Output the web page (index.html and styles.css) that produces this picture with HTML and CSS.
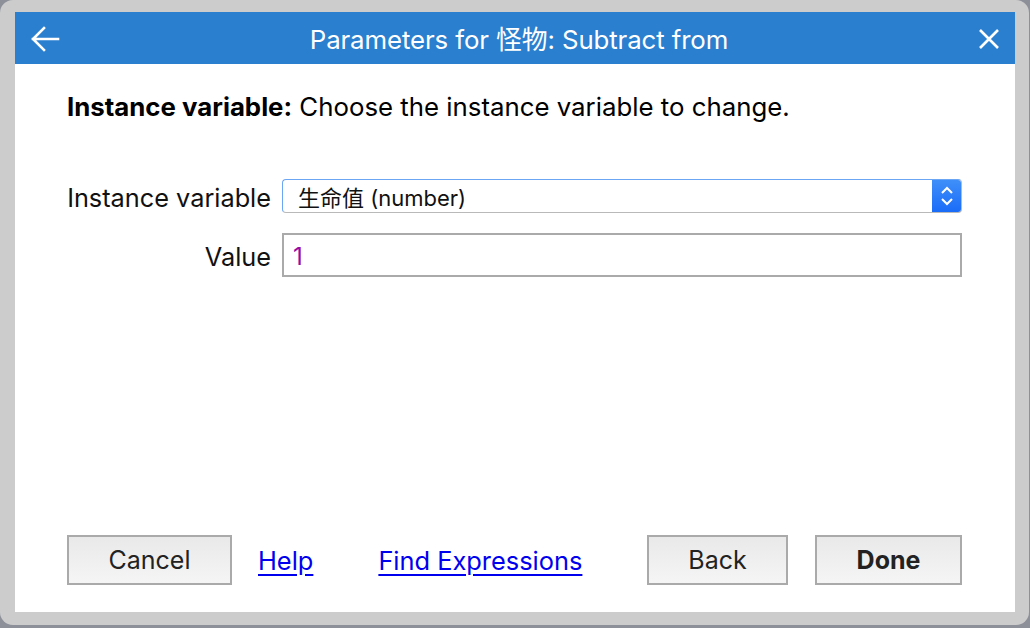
FILE: index.html
```html
<!DOCTYPE html>
<html>
<head>
<meta charset="utf-8">
<link rel="stylesheet" href="styles.css">
</head>
<body>
<div class="frame">
  <div class="dialog">
    <div class="header">
      <svg class="back" width="30" height="28" viewBox="0 0 30 28"><path d="M28 14H3M14 3L3 14l11 11" fill="none" stroke="#fff" stroke-width="2.6" stroke-linecap="square"/></svg>
      <div class="title">Parameters for 怪物: Subtract from</div>
      <svg class="close" width="22" height="22" viewBox="0 0 22 22"><path d="M2 2l18 18M20 2L2 20" fill="none" stroke="#fff" stroke-width="2.6"/></svg>
    </div>
    <div class="content">
      <p class="desc"><b>Instance variable:</b> Choose the instance variable to change.</p>
      <div class="form">
        <label class="lbl">Instance variable</label>
        <div class="select">
          <span class="select-text">生命值 (number)</span>
          <span class="select-btn"><svg width="14" height="22" viewBox="0 0 14 22"><path d="M2 8l5-5 5 5M2 14l5 5 5-5" fill="none" stroke="#fff" stroke-width="2"/></svg></span>
        </div>
        <label class="lbl">Value</label>
        <div class="input">1</div>
      </div>
    </div>
    <div class="footer">
      <button class="btn cancel">Cancel</button>
      <a class="link help" href="#">Help</a>
      <a class="link find" href="#">Find Expressions</a>
      <span class="spacer"></span>
      <button class="btn back-btn">Back</button>
      <button class="btn done">Done</button>
    </div>
  </div>
</div>
</body>
</html>
```
FILE: styles.css
```css
html, body {
  margin: 0;
  padding: 0;
}
body {
  width: 1030px;
  height: 628px;
  background: #8d9099;
  overflow: hidden;
  font-family: Inter, "Noto Sans CJK SC", sans-serif;
}
.frame {
  box-sizing: border-box;
  width: 1029px;
  height: 625px;
  background: #cccccc;
  border-radius: 13px;
  padding: 12px 14px 13px 15px;
}
.dialog {
  background: #fff;
  height: 600px;
  display: flex;
  flex-direction: column;
}
.header {
  height: 52px;
  background: #2a7fcf;
  display: flex;
  align-items: center;
  padding: 0 15px 0 15px;
  color: #fff;
}
.back {
  display: block;
  margin-top: 1px;
}
.title {
  flex: 1;
  text-align: center;
  font-size: 25.8px;
  letter-spacing: -0.1px;
  margin-top: -1px;
}
.close {
  display: block;
  margin-top: 1px;
}
.content {
  flex: 1;
  padding: 0 53px 0 52px;
}
.desc {
  margin: 26px 0 0 0;
  font-size: 25.8px;
  line-height: 34px;
  color: #000;
}
.desc b {
  font-weight: 700;
}
.form {
  margin-top: 55px;
  display: grid;
  grid-template-columns: 204px 1fr;
  grid-template-rows: 34px 44px;
  column-gap: 11px;
  row-gap: 20px;
  align-items: center;
}
.lbl {
  text-align: right;
  font-size: 25.3px;
  color: #111;
  white-space: nowrap;
  padding-top: 3px;
}
.select {
  box-sizing: border-box;
  height: 34px;
  display: flex;
  align-items: stretch;
  border: 1px solid #b9b9b9;
  border-left-color: #6aa6f4;
  border-top-color: #6aa6f4;
  border-radius: 4px;
  overflow: hidden;
  background: #fff;
}
.select-text {
  flex: 1;
  padding-left: 15px;
  font-size: 22px;
  line-height: 36px;
  color: #111;
}
.select-btn {
  width: 29px;
  background: linear-gradient(#3f8ff9, #1a6cf8);
  display: flex;
  align-items: center;
  justify-content: center;
}
.select-btn svg {
  display: block;
}
.input {
  box-sizing: border-box;
  height: 44px;
  border: 2px solid #aaaaaa;
  padding-left: 9px;
  font-size: 24px;
  line-height: 44px;
  color: #9b0aa0;
}
.footer {
  display: flex;
  align-items: center;
  padding: 0 53px 27px 52px;
}
.btn {
  box-sizing: border-box;
  height: 50px;
  border: 2px solid #aaaaaa;
  background: linear-gradient(#e9e9e9, #f5f5f5);
  font-family: Inter, sans-serif;
  font-size: 25px;
  color: #222;
  padding: 0;
  margin: 0;
}
.cancel {
  width: 165px;
}
.link {
  font-size: 25.4px;
  color: #0000ee;
  text-decoration: underline;
  text-underline-offset: 4px;
}
.help {
  margin-left: 26px;
}
.find {
  margin-left: 65px;
}
.spacer {
  flex: 1;
}
.back-btn {
  width: 141px;
}
.done {
  width: 147px;
  margin-left: 27px;
  font-weight: 700;
}
```
